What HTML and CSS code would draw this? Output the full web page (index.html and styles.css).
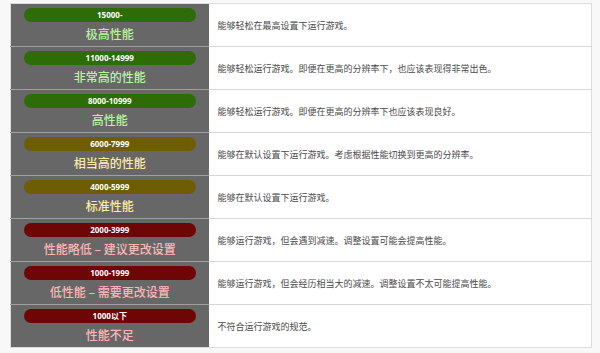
FILE: index.html
```html
<!DOCTYPE html>
<html lang="zh">
<head>
<meta charset="utf-8">
<link rel="stylesheet" href="styles.css">
</head>
<body>
<table class="perf">
  <tr>
    <td class="tier"><div class="pill green">15000-</div><div class="label l-green">极高性能</div></td>
    <td class="desc">能够轻松在最高设置下运行游戏。</td>
  </tr>
  <tr>
    <td class="tier"><div class="pill green">11000-14999</div><div class="label l-green">非常高的性能</div></td>
    <td class="desc">能够轻松运行游戏。即便在更高的分辨率下，也应该表现得非常出色。</td>
  </tr>
  <tr>
    <td class="tier"><div class="pill green">8000-10999</div><div class="label l-green">高性能</div></td>
    <td class="desc">能够轻松运行游戏。即便在更高的分辨率下也应该表现良好。</td>
  </tr>
  <tr>
    <td class="tier"><div class="pill yellow">6000-7999</div><div class="label l-yellow">相当高的性能</div></td>
    <td class="desc">能够在默认设置下运行游戏。考虑根据性能切换到更高的分辨率。</td>
  </tr>
  <tr>
    <td class="tier"><div class="pill yellow">4000-5999</div><div class="label l-yellow">标准性能</div></td>
    <td class="desc">能够在默认设置下运行游戏。</td>
  </tr>
  <tr>
    <td class="tier"><div class="pill red">2000-3999</div><div class="label l-red">性能略低 – 建议更改设置</div></td>
    <td class="desc">能够运行游戏，但会遇到减速。调整设置可能会提高性能。</td>
  </tr>
  <tr>
    <td class="tier"><div class="pill red">1000-1999</div><div class="label l-red">低性能 – 需要更改设置</div></td>
    <td class="desc">能够运行游戏，但会经历相当大的减速。调整设置不太可能提高性能。</td>
  </tr>
  <tr>
    <td class="tier"><div class="pill red">1000以下</div><div class="label l-red">性能不足</div></td>
    <td class="desc">不符合运行游戏的规范。</td>
  </tr>
</table>
</body>
</html>
```

FILE: styles.css
```css
html, body {
  margin: 0;
  padding: 0;
  background: #f8f8f8;
}
body {
  padding: 3px 0 0 10px;
  font-family: "Noto Sans CJK SC", "Noto Sans", sans-serif;
}
.perf {
  border-collapse: collapse;
  width: 582px;
  background: #fff;
  border: 1px solid #dcdcdc;
}
.perf td {
  height: 43px;
  box-sizing: border-box;
  border-top: 1px solid #d8d8d8;
  padding: 0;
}
.perf tr:first-child td {
  border-top: none;
}
.tier {
  width: 198px;
  background: #676767;
  padding: 4px 13px 0 13px !important;
  vertical-align: top;
  text-align: center;
  border-top-color: #a0a0a0 !important;
}
.pill {
  height: 14px;
  border-radius: 7px;
  color: #fff;
  font-family: "Open Sans", "Noto Sans CJK SC", sans-serif;
  font-weight: 700;
  font-size: 8px;
  line-height: 14px;
}
.green { background: #2d6c06; }
.yellow { background: #6f5d05; }
.red { background: #6e0606; }
.label {
  font-size: 12px;
  line-height: 24px;
  font-weight: 500;
}
.l-green { color: #b8f49e; }
.l-yellow { color: #fdeaa5; }
.l-red { color: #ffb6b6; }
.desc {
  padding-left: 9px !important;
  font-size: 9px;
  color: #4a4a4a;
  vertical-align: middle;
}
```
